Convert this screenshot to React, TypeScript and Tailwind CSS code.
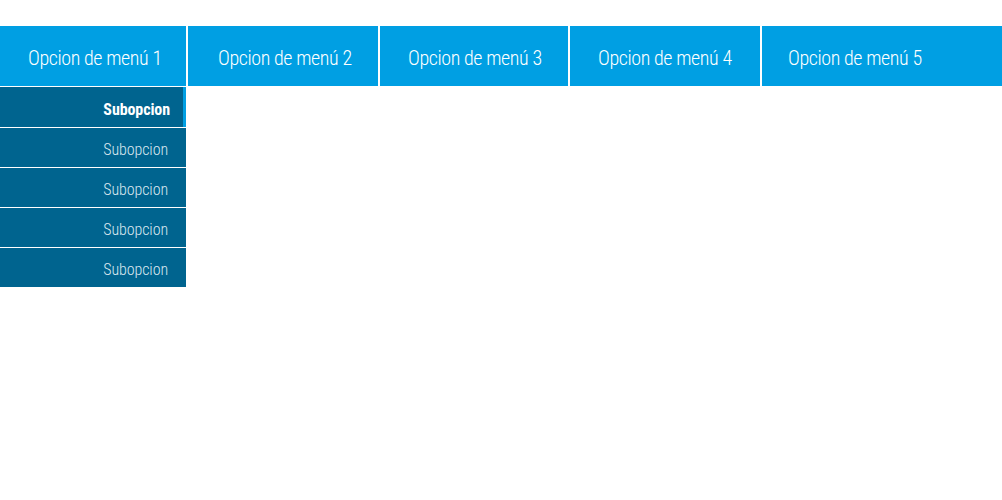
const topItems = [
  { label: "Opcion de menú 1", width: "w-[186px]", pad: "pl-[28px]" },
  { label: "Opcion de menú 2", width: "w-[190px]", pad: "pl-[30px]" },
  { label: "Opcion de menú 3", width: "w-[188px]", pad: "pl-[28px]" },
  { label: "Opcion de menú 4", width: "w-[190px]", pad: "pl-[28px]" },
  { label: "Opcion de menú 5", width: "flex-1", pad: "pl-[26px]" },
];

const subItems = ["Subopcion", "Subopcion", "Subopcion", "Subopcion", "Subopcion"];

export default function App() {
  return (
    <div
      className="w-[1002px] h-[500px] bg-white pt-[26px]"
      style={{ fontFamily: '"Roboto Condensed", Roboto, "Liberation Sans", sans-serif' }}
    >
      <nav className="flex h-[60px] gap-[2px]">
        {topItems.map((item) => (
          <div
            key={item.label}
            className={`${item.width} ${item.pad} flex items-center bg-[#009fe3] text-white text-[20px] font-light tracking-[-0.4px] pt-[3px]`}
          >
            {item.label}
          </div>
        ))}
      </nav>
      <ul className="w-[186px] mt-px">
        {subItems.map((label, i) =>
          i === 0 ? (
            <li
              key={i}
              className="h-[40px] flex items-center justify-end bg-[#00648f] border-r-[3px] border-[#009fe3] pr-[13px] pt-[5px] text-white text-[16px] font-bold tracking-[-0.1px]"
            >
              {label}
            </li>
          ) : (
            <li
              key={i}
              className="h-[40px] flex items-center justify-end bg-[#00648f] border-t border-white pr-[18px] pt-[5px] text-[#dbe8ef] text-[16px] font-light tracking-[-0.1px]"
            >
              {label}
            </li>
          )
        )}
      </ul>
    </div>
  );
}
